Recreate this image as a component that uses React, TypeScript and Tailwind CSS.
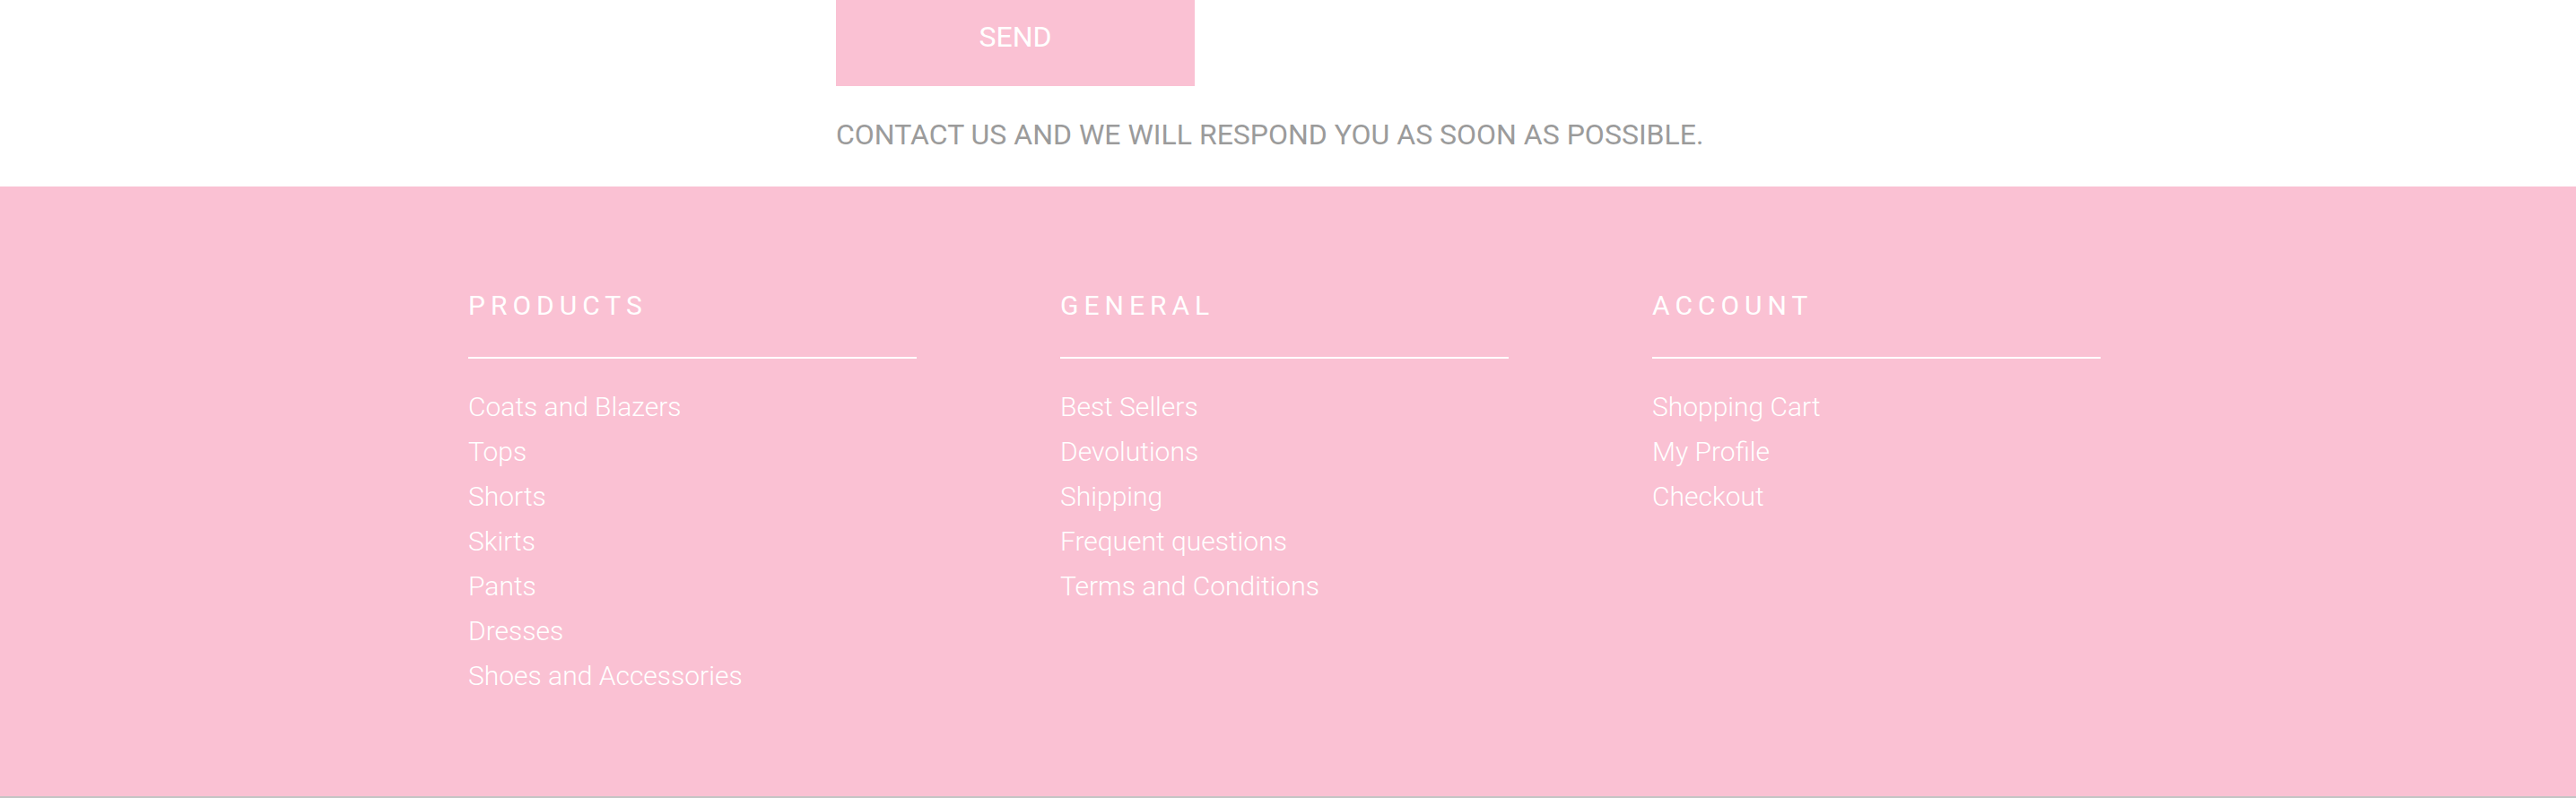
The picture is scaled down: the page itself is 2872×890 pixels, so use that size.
export default function App() {
  const columns = [
    {
      title: "Products",
      links: ["Coats and Blazers", "Tops", "Shorts", "Skirts", "Pants", "Dresses", "Shoes and Accessories"],
    },
    {
      title: "General",
      links: ["Best Sellers", "Devolutions", "Shipping", "Frequent questions", "Terms and Conditions"],
    },
    {
      title: "Account",
      links: ["Shopping Cart", "My Profile", "Checkout"],
    },
  ];

  return (
    <div className="w-full h-[890px] flex flex-col overflow-hidden bg-white font-['Roboto',sans-serif]">
      {/* Contact form tail */}
      <section className="h-[208px] shrink-0 pl-[932px]">
        <button className="-mt-[14px] w-[400px] h-[110px] bg-[#fac1d3] text-white text-[32px] leading-none uppercase">
          Send
        </button>
        <p className="mt-[30px] text-[32px] leading-[48px] text-[#9b9b9b] uppercase">
          Contact us and we will respond you as soon as possible.
        </p>
      </section>

      {/* Footer */}
      <footer className="flex-1 bg-[#fac1d3] border-b-2 border-[#c4c4c4] pt-[115px] pl-[522px] flex">
        {columns.map((col) => (
          <div key={col.title} className="w-[660px] shrink-0">
            <h3 className="text-[30px] leading-[36px] tracking-[6px] text-white uppercase">{col.title}</h3>
            <div className="mt-[39px] w-[500px] h-[2px] bg-white" />
            <ul className="mt-[29px]">
              {col.links.map((link) => (
                <li key={link} className="text-[30px] leading-[50px] font-light text-white">
                  {link}
                </li>
              ))}
            </ul>
          </div>
        ))}
      </footer>
    </div>
  );
}
